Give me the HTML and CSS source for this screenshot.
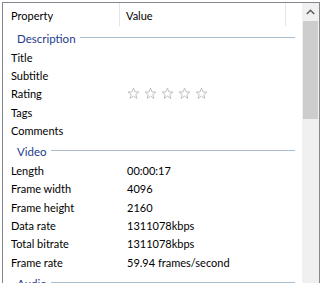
FILE: index.html
```
<!DOCTYPE html>
<html>
<head>
<meta charset="utf-8">
<link rel="stylesheet" href="styles.css">
</head>
<body>
<div class="frame">
  <div class="list">
    <div class="header">
      <div class="hcell hprop">Property</div>
      <div class="hcell hval">Value</div>
      <div class="hcell hrest"></div>
    </div>
    <div class="group"><span class="gtitle">Description</span><span class="gline"></span></div>
    <div class="row"><span class="prop">Title</span><span class="val"></span></div>
    <div class="row"><span class="prop">Subtitle</span><span class="val"></span></div>
    <div class="row"><span class="prop">Rating</span><span class="val stars">
      <svg class="star" viewBox="0 0 14 14"><path d="M7 1.2 L8.6 5.3 L12.9 5.4 L9.5 8 L10.7 12.3 L7 9.8 L3.3 12.3 L4.5 8 L1.1 5.4 L5.4 5.3 Z"/></svg>
      <svg class="star" viewBox="0 0 14 14"><path d="M7 1.2 L8.6 5.3 L12.9 5.4 L9.5 8 L10.7 12.3 L7 9.8 L3.3 12.3 L4.5 8 L1.1 5.4 L5.4 5.3 Z"/></svg>
      <svg class="star" viewBox="0 0 14 14"><path d="M7 1.2 L8.6 5.3 L12.9 5.4 L9.5 8 L10.7 12.3 L7 9.8 L3.3 12.3 L4.5 8 L1.1 5.4 L5.4 5.3 Z"/></svg>
      <svg class="star" viewBox="0 0 14 14"><path d="M7 1.2 L8.6 5.3 L12.9 5.4 L9.5 8 L10.7 12.3 L7 9.8 L3.3 12.3 L4.5 8 L1.1 5.4 L5.4 5.3 Z"/></svg>
      <svg class="star" viewBox="0 0 14 14"><path d="M7 1.2 L8.6 5.3 L12.9 5.4 L9.5 8 L10.7 12.3 L7 9.8 L3.3 12.3 L4.5 8 L1.1 5.4 L5.4 5.3 Z"/></svg>
    </span></div>
    <div class="row"><span class="prop">Tags</span><span class="val"></span></div>
    <div class="row"><span class="prop">Comments</span><span class="val"></span></div>
    <div class="group"><span class="gtitle">Video</span><span class="gline"></span></div>
    <div class="row"><span class="prop">Length</span><span class="val">00:00:17</span></div>
    <div class="row"><span class="prop">Frame width</span><span class="val">4096</span></div>
    <div class="row"><span class="prop">Frame height</span><span class="val">2160</span></div>
    <div class="row"><span class="prop">Data rate</span><span class="val">1311078kbps</span></div>
    <div class="row"><span class="prop">Total bitrate</span><span class="val">1311078kbps</span></div>
    <div class="row"><span class="prop">Frame rate</span><span class="val">59.94 frames/second</span></div>
    <div class="group"><span class="gtitle">Audio</span><span class="gline"></span></div>
  </div>
  <div class="scrollbar">
    <div class="sbtn">
      <svg viewBox="0 0 9 6" class="arrow"><path d="M0.8 5 L4.5 1.3 L8.2 5"/></svg>
    </div>
    <div class="thumb"></div>
  </div>
</div>
</body>
</html>
```

FILE: styles.css
```
html, body {
  margin: 0;
  padding: 0;
  background: #ffffff;
  overflow: hidden;
}
body {
  width: 326px;
  height: 283px;
  font-family: "Lato", "Noto Sans", sans-serif;
  font-size: 11px;
  color: #000000;
}
.frame {
  margin: 2px 0 0 2px;
  width: 316px;
  height: 310px;
  border: 1px solid #828790;
  display: flex;
  background: #ffffff;
}
.list {
  flex: 1;
  display: flex;
  flex-direction: column;
}
.header {
  display: flex;
  height: 23px;
  flex: none;
}
.hcell {
  display: flex;
  align-items: center;
  height: 100%;
  box-sizing: border-box;
  padding-top: 1px;
  border-right: 1px solid #e5e5e5;
}
.hprop {
  width: 117px;
  padding-left: 8px;
}
.hval {
  width: 166px;
  padding-left: 6px;
}
.hrest {
  flex: 1;
  border-right: none;
}
.group {
  display: flex;
  align-items: center;
  height: 22px;
  box-sizing: border-box;
  padding-top: 2px;
  flex: none;
  padding-left: 14px;
  padding-right: 7px;
}
.gtitle {
  color: #1e3b8c;
  font-size: 11.5px;
  padding-right: 4px;
}
.gline {
  flex: 1;
  height: 1px;
  margin-top: -1px;
  background: #a9bcd0;
}
.row {
  display: flex;
  align-items: center;
  height: 18.3px;
  flex: none;
}
.prop {
  width: 124px;
  padding-left: 8px;
  box-sizing: border-box;
  flex: none;
}
.stars {
  display: flex;
  gap: 4px;
}
.star {
  width: 13px;
  height: 13px;
  fill: none;
  stroke: #b8b8b8;
  stroke-width: 0.95;
}
.scrollbar {
  width: 17px;
  flex: none;
  background: #f0f0f0;
  display: flex;
  flex-direction: column;
  align-items: center;
}
.sbtn {
  height: 17px;
  width: 17px;
  display: flex;
  align-items: center;
  justify-content: center;
}
.arrow {
  width: 9px;
  height: 6px;
  fill: none;
  stroke: #606060;
  stroke-width: 1.6;
}
.thumb {
  margin-top: 1px;
  width: 15px;
  height: 98px;
  background: #cdcdcd;
}
```
